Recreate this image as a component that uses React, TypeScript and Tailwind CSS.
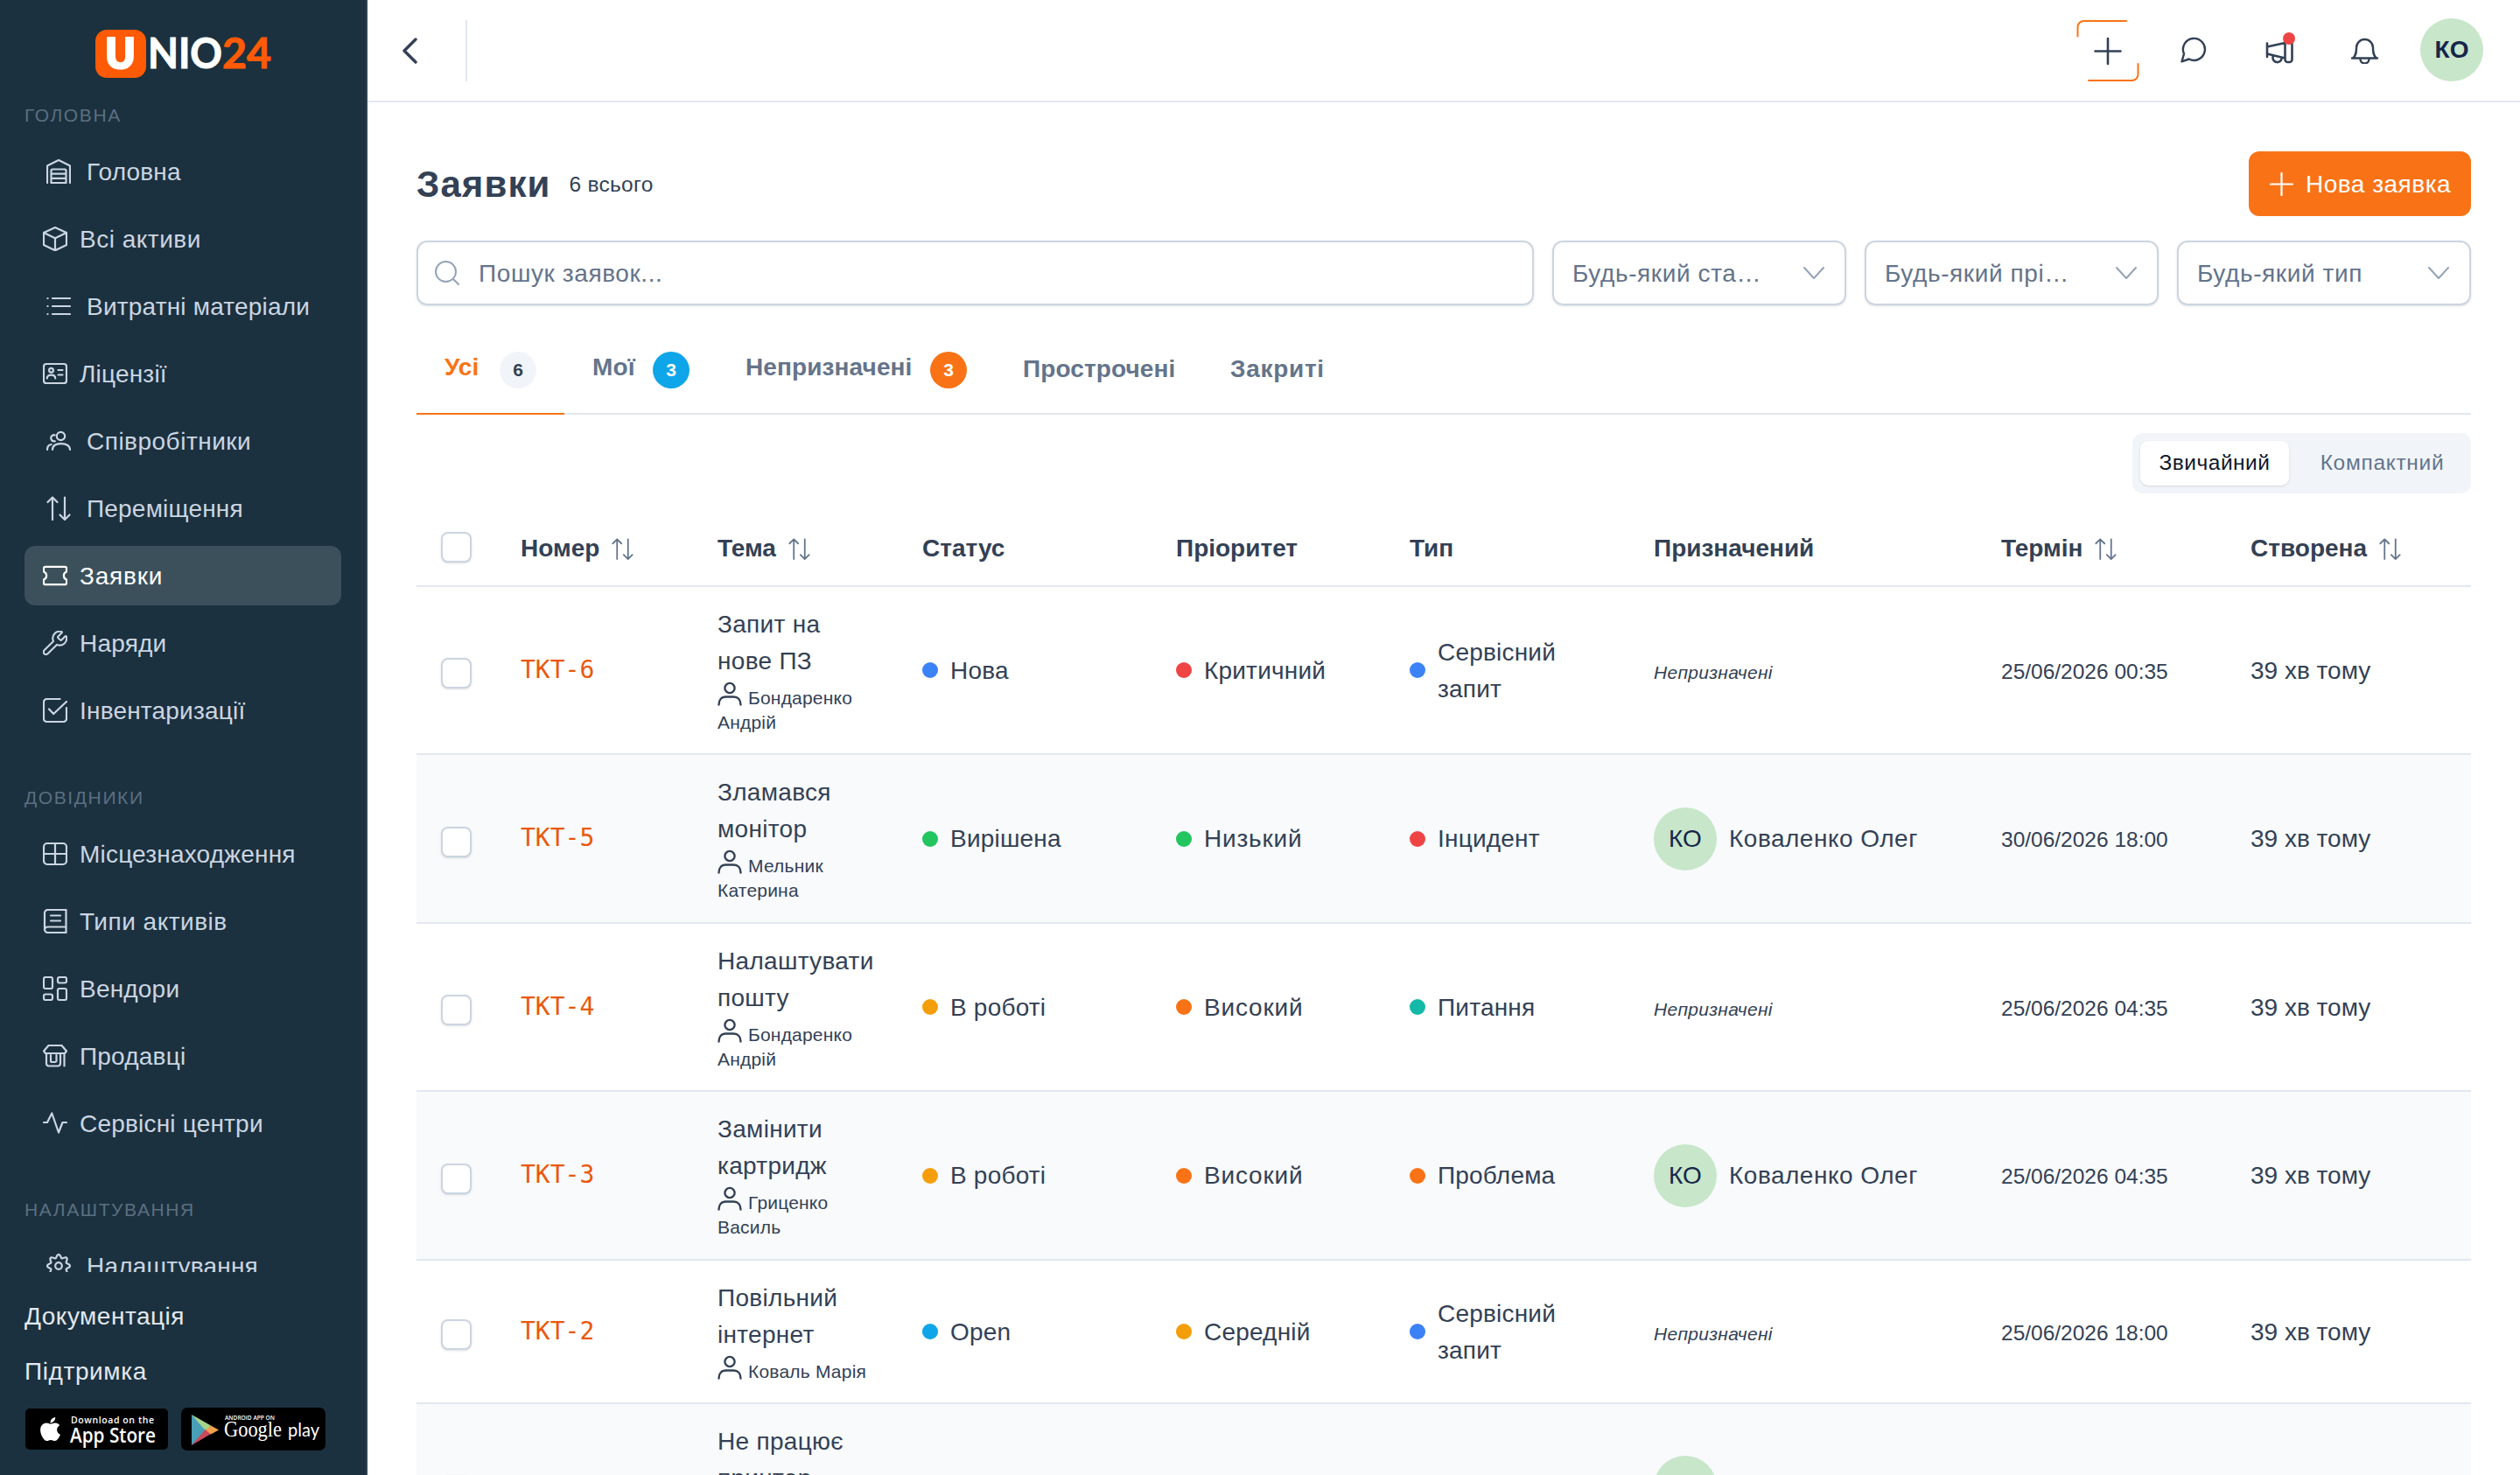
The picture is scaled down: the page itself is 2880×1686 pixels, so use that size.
import type { ReactNode } from "react";
import { FaApple } from "react-icons/fa";

// ---------- Icons ----------

function Icon({ size = 28, w = 28, h = 28, stroke = 2, className = "", children }: {
  size?: number;
  w?: number;
  h?: number;
  stroke?: number;
  className?: string;
  children: ReactNode;
}) {
  return (
    <svg
      width={(size * w) / 28}
      height={(size * h) / 28}
      viewBox={`0 0 ${w} ${h}`}
      fill="none"
      stroke="currentColor"
      strokeWidth={stroke}
      strokeLinecap="round"
      strokeLinejoin="round"
      className={`shrink-0 ${className}`}
    >
      {children}
    </svg>
  );
}

// Eight-lobed gear outline
const gearPath =
  Array.from({ length: 120 }, (_, i) => {
    const a = (i / 120) * Math.PI * 2;
    const r = 11.2 + 1.8 * Math.cos(8 * a);
    return `${i === 0 ? "M" : "L"}${(14 + r * Math.cos(a)).toFixed(2)} ${(14 + r * Math.sin(a)).toFixed(2)}`;
  }).join("") + "Z";

const sortPaths = (
  <path d="M7 27V1.5M1.5 7 7 1.5 12.5 7M21 1.5V27M15.5 21.5 21 27l5.5-5.5" />
);

const icons: Record<string, ReactNode> = {
  warehouse: <path d="M1 27V7.5L14 1l13 6.5V27M5.5 27V13a1.5 1.5 0 0 1 1.5-1.5h14a1.5 1.5 0 0 1 1.5 1.5v14zM5.5 16.7h17M5.5 21.8h17" />,
  box: <path d="M14 1 27 7v14l-13 6.3L1 21V7zM1 7l13 6.3L27 7M14 13.3v14" />,
  list: <path d="M7 5h20M7 14h20M7 23h20M1.4 5h.2M1.4 14h.2M1.4 23h.2" />,
  idcard: (
    <>
      <rect x="1" y="3" width="26" height="22" rx="3" />
      <circle cx="9.5" cy="10.3" r="2.4" />
      <path d="M4.8 19.5c0-2.6 1.8-3.8 4.7-3.8s4.7 1.2 4.7 3.8M17.5 10h5M17.5 15.5h5" />
    </>
  ),
  users: <path d="M16.5 13.2a4.7 4.7 0 1 0 0-9.4 4.7 4.7 0 0 0 0 9.4ZM7 24c0-4.3 3.8-6.8 10-6.8s10 2.5 10 6.8M9.5 7.3a3.6 3.6 0 1 0 .3 7M1 24c0-3.5 1.6-5.6 4.6-6" />,
  sort: sortPaths,
  ticket: <path d="M1 9.5V5.5A1.7 1.7 0 0 1 2.7 3.8h22.6A1.7 1.7 0 0 1 27 5.5v4a4.8 4.8 0 0 0 0 9v4a1.7 1.7 0 0 1-1.7 1.7H2.7A1.7 1.7 0 0 1 1 22.5v-4a4.8 4.8 0 0 0 0-9Z" />,
  wrench: (
    <g transform="translate(-1.9 -1.9) scale(1.32)" strokeWidth="1.6">
      <path d="M14.7 6.3a1 1 0 0 0 0 1.4l1.6 1.6a1 1 0 0 0 1.4 0l3.106-3.105c.32-.322.863-.22.983.218a6 6 0 0 1-8.259 7.057l-7.91 7.91a1 1 0 0 1-2.999-3l7.91-7.91a6 6 0 0 1 7.057-8.259c.438.12.54.662.219.984z" />
    </g>
  ),
  check: <path d="M19.5 1H4.5A3.5 3.5 0 0 0 1 4.5v19A3.5 3.5 0 0 0 4.5 27h19a3.5 3.5 0 0 0 3.5-3.5V11M7 12.5l5.2 5.5L27 4" />,
  grid: (
    <>
      <rect x="1" y="2" width="26" height="24" rx="4" />
      <path d="M14 2v24M1 14h26" />
    </>
  ),
  book: <path d="M26.5 20.5V1H5.5A3.5 3.5 0 0 0 2 4.5v19A3.5 3.5 0 0 0 5.500 27h21v-6.5h-21A3.500 3.500 0 0 0 2 24M9 7.500h11M9 13.500h11" />,
  tiles: (
    <>
      <rect x="1" y="1" width="10" height="13" rx="2" />
      <rect x="17" y="1" width="10" height="6.5" rx="2" />
      <rect x="1" y="20.5" width="10" height="6.5" rx="2" />
      <rect x="17" y="14" width="10" height="13" rx="2" />
    </>
  ),
  shop: <path d="M6.5 2h15L27 8.5l-2 2.5H3L1 8.5zM4 11v11.5a3 3 0 0 0 3 3h10a3 3 0 0 0 3-3V11M9 13v6.5a1.5 1.5 0 0 0 1.5 1.5h3.5a1.5 1.5 0 0 0 1.5-1.5V13M24.5 11v14.5" />,
  pulse: <path d="M1 13h4l5.300-10.500L18 24.500 22.500 13H27" />,
  cog: (
    <>
      <path d={gearPath} />
      <circle cx="14" cy="14" r="3.8" />
    </>
  ),
};

// ---------- Data ----------

const SECTIONS = [
  {
    title: "ГОЛОВНА",
    margin: "mt-[27px]",
    items: [
      { icon: "warehouse", label: "Головна", inset: true },
      { icon: "box", label: "Всі активи" },
      { icon: "list", label: "Витратні матеріали", inset: true },
      { icon: "idcard", label: "Ліцензії" },
      { icon: "users", label: "Співробітники", inset: true },
      { icon: "sort", label: "Переміщення", inset: true },
      { icon: "ticket", label: "Заявки", active: true },
      { icon: "wrench", label: "Наряди" },
      { icon: "check", label: "Інвентаризації" },
    ],
  },
  {
    title: "ДОВІДНИКИ",
    margin: "mt-[51px]",
    items: [
      { icon: "grid", label: "Місцезнаходження" },
      { icon: "book", label: "Типи активів" },
      { icon: "tiles", label: "Вендори" },
      { icon: "shop", label: "Продавці" },
      { icon: "pulse", label: "Сервісні центри" },
    ],
  },
  {
    title: "НАЛАШТУВАННЯ",
    margin: "mt-[50px]",
    items: [{ icon: "cog", label: "Налаштування", inset: true }],
  },
] as { title: string; margin: string; items: { icon: string; label: string; inset?: boolean; active?: boolean }[] }[];

const TABS = [
  { label: "Усі", count: 6, width: "w-[169px]", badge: "bg-[#f1f5f9] text-[#334155]", active: true },
  { label: "Мої", count: 3, width: "w-[175px]", badge: "bg-[#0ea5e9] text-white" },
  { label: "Непризначені", count: 3, width: "w-[317px]", badge: "bg-[#f97316] text-white" },
  { label: "Прострочені", width: "w-[237px]" },
  { label: "Закриті", width: "w-[171px]" },
];

const COLUMNS = [
  { label: "Номер", sort: true },
  { label: "Тема", sort: true },
  { label: "Статус" },
  { label: "Пріоритет" },
  { label: "Тип" },
  { label: "Призначений" },
  { label: "Термін", sort: true },
  { label: "Створена", sort: true },
];

const BLUE = "bg-[#3b82f6]";
const RED = "bg-[#ef4444]";
const GREEN = "bg-[#22c55e]";
const AMBER = "bg-[#f59e0b]";
const ORANGE = "bg-[#f97316]";
const SKY = "bg-[#0ea5e9]";
const TEAL = "bg-[#14b8a6]";

const TICKETS = [
  { id: "TKT-6", topic: "Запит на\nнове ПЗ", author: "Бондаренко\nАндрій", status: ["Нова", BLUE], priority: ["Критичний", RED], type: ["Сервісний\nзапит", BLUE], due: "25/06/2026 00:35", height: "h-[192px]" },
  { id: "TKT-5", topic: "Зламався\nмонітор", author: "Мельник\nКатерина", status: ["Вирішена", GREEN], priority: ["Низький", GREEN], type: ["Інцидент", RED], assignee: "Коваленко Олег", due: "30/06/2026 18:00", height: "h-[193px]" },
  { id: "TKT-4", topic: "Налаштувати\nпошту", author: "Бондаренко\nАндрій", status: ["В роботі", AMBER], priority: ["Високий", ORANGE], type: ["Питання", TEAL], due: "25/06/2026 04:35", height: "h-[192px]" },
  { id: "TKT-3", topic: "Замінити\nкартридж", author: "Гриценко\nВасиль", status: ["В роботі", AMBER], priority: ["Високий", ORANGE], type: ["Проблема", ORANGE], assignee: "Коваленко Олег", due: "25/06/2026 04:35", height: "h-[193px]" },
  { id: "TKT-2", topic: "Повільний\nінтернет", author: "Коваль Марія", status: ["Open", SKY], priority: ["Середній", AMBER], type: ["Сервісний\nзапит", BLUE], due: "25/06/2026 18:00", height: "h-[164px]" },
  { id: "TKT-1", topic: "Не працює\nпринтер", author: "Мельник\nКатерина", status: ["Нова", BLUE], priority: ["Високий", ORANGE], type: ["Інцидент", RED], assignee: "Коваленко Олег", due: "25/06/2026 04:35", height: "h-[192px]" },
];

const GRID = "grid shrink-0 grid-cols-[119px_225px_234px_290px_267px_279px_397px_285px_252px]";

function tracking(text: string) {
  if (!text.includes("к")) return "tracking-[0.2px]";
  return text.length < 10 ? "tracking-[0.8px]" : "tracking-[0.5px]";
}

// ---------- Sidebar ----------

function Logo() {
  return (
    <svg width="202" height="56" viewBox="0 0 202 56" className="mt-[34px] ml-[109px] shrink-0 overflow-visible">
      <rect width="58" height="55" rx="13" fill="#ff5a05" />
      <text x="9.5" y="45" fontFamily="Open Sans" fontWeight="800" fontSize="51" fill="#fff" textLength="38" lengthAdjust="spacingAndGlyphs">U</text>
      <text x="60" y="44" fontFamily="Lato" fontWeight="700" fontSize="47" fill="#fff" stroke="#fff" strokeWidth="1" textLength="85" lengthAdjust="spacingAndGlyphs">NIO</text>
      <text x="145" y="44" fontFamily="Lato" fontWeight="700" fontSize="47" fill="#ff5a05" stroke="#ff5a05" strokeWidth="1" textLength="56" lengthAdjust="spacingAndGlyphs">24</text>
    </svg>
  );
}

function StoreBadges() {
  return (
    <div className="mt-[20px] ml-[1px] flex items-center gap-[15px]">
      <div className="flex h-[47px] w-[163px] items-center rounded-[5px] bg-black pl-[13px] text-white">
        <FaApple className="size-[31px]" />
        <svg width="100" height="46" viewBox="0 0 100 46" className="ml-[6px] overflow-visible" fill="#fff" fontFamily="Open Sans">
          <text x="2" y="16" fontSize="10.5" fontWeight="600" textLength="95" lengthAdjust="spacing">Download on the</text>
          <text x="1" y="38" fontSize="23" fontWeight="600" textLength="98" lengthAdjust="spacingAndGlyphs">App Store</text>
        </svg>
      </div>
      <svg width="165" height="49" viewBox="0 0 165 49" className="overflow-visible">
        <rect width="165" height="49" rx="7" fill="#000" />
        <path d="M12 8v35l18-17.5z" fill="#4a9fb8" />
        <path d="M12 8l22 12.5-6 6z" fill="#a5d58a" />
        <path d="M12 43l22-13-6-5.5z" fill="#c94a5c" />
        <path d="M34 20.5l9 5-9 5-6-5z" fill="#f2a04e" />
        <text x="50" y="14" fill="#fff" fontFamily="Open Sans" fontWeight="600" fontSize="7.5" textLength="57" lengthAdjust="spacingAndGlyphs">ANDROID APP ON</text>
        <text x="49" y="33" fill="#fff" fontFamily="Liberation Serif" fontSize="25" textLength="66" lengthAdjust="spacingAndGlyphs">Google</text>
        <text x="122" y="33" fill="#fff" fontFamily="Lato" fontSize="22" textLength="36" lengthAdjust="spacingAndGlyphs">play</text>
      </svg>
    </div>
  );
}

function Sidebar() {
  return (
    <aside className="flex h-full w-[420px] shrink-0 flex-col border-r-2 border-[#334155] bg-[#1b313f]">
      <Logo />
      <nav className="h-[1364px] shrink-0 overflow-hidden px-[28px]">
        {SECTIONS.map((section) => (
          <div key={section.title}>
            <div className={`${section.margin} mb-[15px] h-[30px] text-[21px] leading-[30px] tracking-[1.6px] text-[#5b6f81]`}>
              {section.title}
            </div>
            <div className="flex flex-col gap-[9px]">
              {section.items.map((item) => (
                <div
                  key={item.label}
                  className={`flex h-[68px] w-[362px] items-center rounded-[12px] ${
                    item.active ? "bg-[#3c505b] text-white" : "text-[#cbd5e1]"
                  } ${item.inset ? "gap-[18px] pl-[25px]" : "gap-[14px] pl-[21px]"}`}
                >
                  <Icon stroke={2.2}>{icons[item.icon]}</Icon>
                  <span className={`pt-[2px] whitespace-nowrap ${tracking(item.label)}`}>{item.label}</span>
                </div>
              ))}
            </div>
          </div>
        ))}
      </nav>
      <div className="shrink-0 px-[28px] pt-[30px] text-[#e2e8f0]">
        <div className="mb-[21px] tracking-[0.5px]">Документація</div>
        <div className="tracking-[0.6px]">Підтримка</div>
        <StoreBadges />
      </div>
    </aside>
  );
}

// ---------- Header ----------

function Header() {
  return (
    <header className="flex h-[117px] shrink-0 items-start border-b-2 border-[#e2e8f0] pl-[39px] text-[#334155]">
      <svg width="18" height="30" viewBox="0 0 18 30" fill="none" stroke="currentColor" strokeWidth="3.4" strokeLinecap="round" strokeLinejoin="round" className="mt-[43px]">
        <path d="M16 2 3 15l13 13" />
      </svg>
      <div className="mt-[23px] ml-[55px] h-[70px] w-[2px] bg-[#e2e8f0]" />
      <div className="ml-auto flex items-start pr-[42px]">
        <svg width="72" height="72" viewBox="0 0 72 72" fill="none" strokeLinecap="round" className="mt-[22px] mr-[47px]">
          <path d="M1.5 19.5V9a7 7 0 0 1 7-7H57M70.5 51v12a7 7 0 0 1-7 7H14" stroke="#f97316" strokeWidth="2" />
          <path d="M36 22v29M21.5 36.5h29" stroke="currentColor" strokeWidth="2.6" />
        </svg>
        <Icon w={30} h={30} stroke={2.4} className="mt-[42px] mr-[67px]">
          <path d="M1.5 28.3 4 19.5A12.5 12.5 0 1 1 9.7 25.5Z" />
        </Icon>
        <div className="relative mt-[43px] mr-[63px]">
          <Icon w={34} h={31} stroke={2.6}>
            <path d="M2 6.5v15.500M2 10.500 22.500 6M2 18.500l20.500 5M25.500 2.500h2a3 3 0 0 1 3 3v19.500a3 3 0 0 1-3 3h-2a3 3 0 0 1-3-3v-19.500a3 3 0 0 1 3-3M8.500 22c-.500 7.500 9 8 10 2" />
          </Icon>
          <span className="absolute -top-[6px] left-[20px] size-[14px] rounded-full bg-[#ef4444]" />
        </div>
        <Icon w={33} h={31} stroke={2.4} className="mt-[42px] mr-[47px]">
          <path d="M2 24.5h29M3 24.500c3.500-3 4-6 4-12a9.500 9.500 0 0 1 19 0c0 6 .5 9 4 12M11.500 25.500a5 5 0 0 0 10 0" />
        </Icon>
        <div className="mt-[21px] flex size-[72px] items-center justify-center rounded-full bg-[#c8e6c9] font-bold text-[#16264a]">КО</div>
      </div>
    </header>
  );
}

// ---------- Table ----------

function Dot({ value }: { value: string[] }) {
  return (
    <div className="flex items-center gap-[14px]">
      <span className={`size-[18px] shrink-0 rounded-full ${value[1]}`} />
      <span className={`pt-px whitespace-pre ${tracking(value[0])}`}>{value[0]}</span>
    </div>
  );
}

function Checkbox() {
  return <span className="block size-[35px] rounded-[8px] border-2 border-[#cbd5e1] bg-white shadow-sm" />;
}

function Table() {
  return (
    <div className="flex flex-col">
      <div className={`${GRID} h-[107px] items-center border-b-2 border-[#e2e8f0] pt-[18px] font-bold`}>
        <div className="pl-[28px]"><Checkbox /></div>
        {COLUMNS.map((col) => (
          <div key={col.label} className="flex items-center gap-[14px] pt-[3px]">
            {col.label}
            {col.sort && <Icon size={25} className="text-[#64748b]">{sortPaths}</Icon>}
          </div>
        ))}
      </div>
      {TICKETS.map((t, i) => (
        <div key={t.id} className={`${GRID} ${t.height} items-center border-b-2 border-[#e2e8f0] ${i % 2 ? "bg-[#f8fafc]" : ""}`}>
          <div className="pt-[7px] pl-[28px]"><Checkbox /></div>
          <div className="pb-px font-['DejaVu_Sans_Mono',monospace] text-[#ea580c]">{t.id}</div>
          <div className="whitespace-pre">
            <div className="tracking-[0.3px]">{t.topic}</div>
            <div className="text-[21px] leading-[28px] tracking-[0.2px]">
              <Icon stroke={2.4} className="relative top-[2px] mr-[7px] inline align-baseline">
                <circle cx="14" cy="7.500" r="5.600" />
                <path d="M1.500 26.500c0-5.500 3-9 8-9h9c5 0 8 3.500 8 9" />
              </Icon>
              {t.author}
            </div>
          </div>
          <Dot value={t.status} />
          <Dot value={t.priority} />
          <Dot value={t.type} />
          {t.assignee ? (
            <div className="flex items-center gap-[14px]">
              <span className="flex size-[72px] items-center justify-center rounded-full bg-[#c8e6c9] text-[#16264a]">КО</span>
              <span className="tracking-[0.5px]">{t.assignee}</span>
            </div>
          ) : (
            <div className="pt-[5px] text-[21px] tracking-[0.3px] italic">Непризначені</div>
          )}
          <div className="pt-[3px] text-[24.5px]">{t.due}</div>
          <div className="pt-px">39 хв тому</div>
        </div>
      ))}
    </div>
  );
}

// ---------- Page ----------

export default function App() {
  return (
    <div className="flex h-[1686px] w-[2880px] overflow-hidden bg-white font-['Liberation_Sans',Arial,sans-serif] text-[28px] leading-[42px] text-[#334155]">
      <Sidebar />
      <main className="flex h-full min-w-0 flex-1 flex-col overflow-hidden">
        <Header />
        <div className="flex flex-col pt-[56px] pr-[56px] pl-[56px]">
          <div className="flex h-[74px] items-center">
            <h1 className="text-[42px] leading-[63px] font-bold tracking-[1.1px]">Заявки</h1>
            <span className="ml-[21px] pt-px text-[24.5px] tracking-[0.3px]">6 всього</span>
            <button className="ml-auto flex h-[74px] w-[254px] items-center rounded-[12px] bg-[#f97316] pl-[24px] text-white">
              <svg width="27" height="27" viewBox="0 0 27 27" stroke="currentColor" strokeWidth="2.2" strokeLinecap="round">
                <path d="M13.5 1v25M1 13.5h25" />
              </svg>
              <span className="ml-[14px] pt-[2px] tracking-[0.5px] whitespace-nowrap">Нова заявка</span>
            </button>
          </div>

          {/* Search and filters */}
          <div className="mt-[28px] flex h-[74px] gap-[21px]">
            <div className="flex flex-1 items-center rounded-[12px] border-2 border-[#cbd5e1] pl-[19px] text-[#64748b] shadow-sm">
              <Icon className="text-[#94a3b8]">
                <path d="M12.5 24a11.5 11.5 0 1 0 0-23 11.5 11.5 0 0 0 0 23ZM20.7 20.7 27 27" />
              </Icon>
              <span className="ml-[22px] pt-px tracking-[0.6px]">Пошук заявок...</span>
            </div>
            {["Будь-який ста…", "Будь-який прі…", "Будь-який тип"].map((label) => (
              <div key={label} className="flex w-[336px] items-center justify-between rounded-[12px] border-2 border-[#cbd5e1] px-[21px] text-[#64748b] shadow-sm">
                <span className="pt-px tracking-[0.6px] whitespace-nowrap">{label}</span>
                <Icon className="text-[#94a3b8]">
                  <path d="M3 8l11 12L25 8" />
                </Icon>
              </div>
            ))}
          </div>

          {/* Tabs */}
          <div className="flex h-[125px] border-b-2 border-[#e2e8f0] font-bold text-[#64748b]">
            {TABS.map((tab) => (
              <div
                key={tab.label}
                className={`-mb-[2px] flex items-start justify-between px-[32px] pt-[50px] ${tab.width} ${
                  tab.active ? "border-b-2 border-[#f97316] text-[#f97316]" : ""
                }`}
              >
                <span className={`${tab.count ? "" : "pt-[2px]"} ${tab.label === "Закриті" ? "tracking-[0.7px]" : "tracking-[0.1px]"}`}>{tab.label}</span>
                {tab.count && (
                  <span className={`mt-[3px] flex size-[42px] items-center justify-center rounded-full text-[21px] ${tab.badge}`}>{tab.count}</span>
                )}
              </div>
            ))}
          </div>

          {/* Density switch */}
          <div className="mt-[21px] flex h-[69px] w-[387px] items-center self-end rounded-[12px] bg-[#f1f5f9] px-[9px] text-[24.5px]">
            <div className="flex h-[51px] w-[170px] items-center justify-center rounded-[9px] bg-white pb-px tracking-[0.5px] text-[#0f172a] shadow-sm">Звичайний</div>
            <div className="flex-1 pb-px pl-[14px] text-center tracking-[0.7px] text-[#64748b]">Компактний</div>
          </div>

          <Table />
        </div>
      </main>
    </div>
  );
}
